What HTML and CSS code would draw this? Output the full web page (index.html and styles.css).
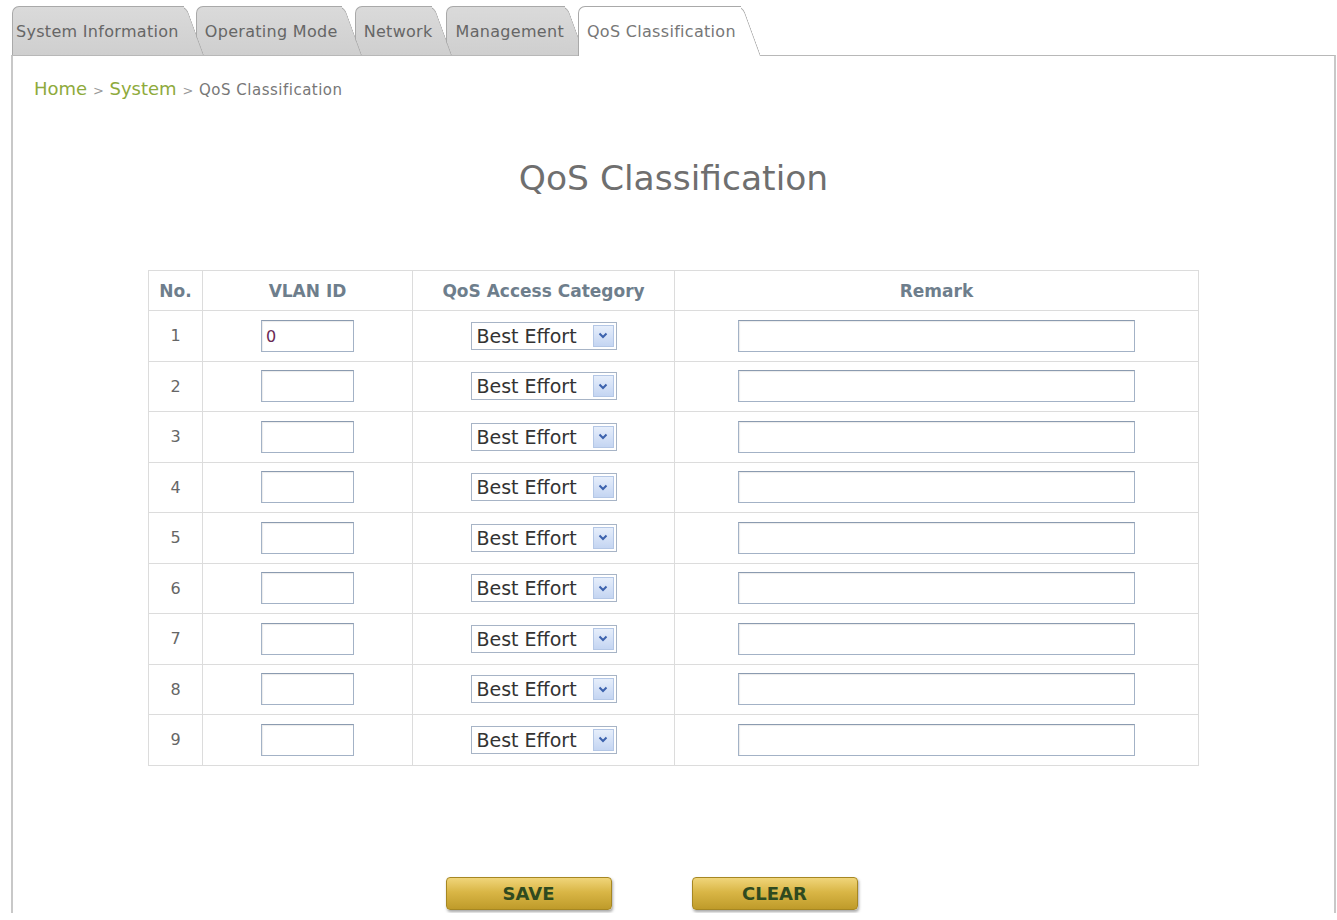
FILE: index.html
```html
<!DOCTYPE html>
<html lang="en">
<head>
    <meta charset="UTF-8">
    <meta name="viewport" content="width=device-width, initial-scale=1.0">
    <title>QoS Classification</title>
    <link rel="stylesheet" href="styles.css">
</head>
<body>
<div class="page">
    <ul class="tabs">
        <li class="tab t1">System Information</li>
        <li class="tab t2">Operating Mode</li>
        <li class="tab t3">Network</li>
        <li class="tab t4">Management</li>
        <li class="tab active">QoS Classification</li>
    </ul>

    <div class="panel">
        <div class="crumbs">
            <a href="#">Home</a> <span class="sep">&gt;</span> <a href="#">System</a> <span class="sep">&gt;</span> <span class="current">QoS Classification</span>
        </div>

        <h1>QoS Classification</h1>

        <form id="qosForm">
            <table class="qos">
                <thead>
                    <tr>
                        <th class="c-no">No.</th>
                        <th class="c-vlan">VLAN ID</th>
                        <th class="c-cat">QoS Access Category</th>
                        <th class="c-rem">Remark</th>
                    </tr>
                </thead>
                <tbody id="rows"></tbody>
            </table>

            <div class="actions">
                <button type="button" class="gold">SAVE</button>
                <button type="reset" class="gold">CLEAR</button>
            </div>
        </form>
    </div>
</div>

<script>
// build the 9 rows
const tbody = document.getElementById("rows");
for (let i = 1; i <= 9; i++) {
    let tr = document.createElement("tr");
    tr.innerHTML = `
        <td class="num">${i}</td>
        <td><input type="text" class="vlan" name="vlan${i}" value="${i === 1 ? "0" : ""}"></td>
        <td>
            <div class="select-wrap">
                <select name="cat${i}">
                    <option>Best Effort</option>
                    <option>Background</option>
                    <option>Video</option>
                    <option>Voice</option>
                </select>
                <span class="arrow"><svg width="10" height="7" viewBox="0 0 10 7"><path d="M1.5 1.5 L5 5 L8.5 1.5" fill="none" stroke="#3c62ad" stroke-width="2"/></svg></span>
            </div>
        </td>
        <td><input type="text" class="remark" name="remark${i}"></td>`;
    tbody.appendChild(tr);
}
</script>
</body>
</html>
```

FILE: styles.css
```css
body {
    margin: 0;
    background: #fff;
    font-family: "DejaVu Sans", Verdana, sans-serif;
    color: #555;
}

.page {
    padding-left: 11px;
    width: 1325px;
}

/* tabs */
.tabs {
    list-style: none;
    margin: 6px 0 0 0;
    padding: 0 0 0 1px;
    display: flex;
    height: 49px;
    position: relative;
    z-index: 2;
}

.tab {
    position: relative;
    height: 49px;
    line-height: 52px;
    font-size: 16px;
    letter-spacing: 0.3px;
    color: #666;
    white-space: nowrap;
}

.tab::before,
.tab::after {
    content: "";
    position: absolute;
    top: 0;
    bottom: 0;
    background: linear-gradient(#dadada, #cfcfcf);
    border: 1px solid #a9a9a9;
    border-bottom: none;
}

.tab::before {
    left: 0;
    right: 20px;
    border-right: none;
    border-radius: 7px 0 0 0;
    z-index: -1;
}

.tab::after {
    left: 30px;
    right: 0;
    border-left: none;
    border-radius: 0 7px 0 0;
    transform: skewX(20deg);
    transform-origin: bottom right;
    z-index: -2;
}

.t1 { z-index: 5; padding: 0 25px 0 4px; margin-right: -8px; }
.t2 { z-index: 4; padding: 0 24px 0 9px; margin-right: -7px; }
.t3 { z-index: 3; padding: 0 19px 0 9px; margin-right: -6px; }
.t4 { z-index: 2; padding: 0 21px 0 10px; margin-right: -7px; }

.tab.active {
    z-index: 10;
    padding: 0 25px 0 9px;
    color: #777;
}

.tab.active::before,
.tab.active::after {
    background: #fff;
    bottom: -1px;
}

/* content panel */
.panel {
    border: 1px solid #b8b8b8;
    border-bottom: none;
    border-left-width: 2px;
    border-right-width: 2px;
    border-left-color: #c8c8c8;
    border-right-color: #c8c8c8;
    height: 858px;
    box-sizing: border-box;
    padding: 23px 0 0 21px;
}

.crumbs {
    height: 20px;
    line-height: 20px;
    font-size: 18px;
}

.crumbs a {
    color: #8eaa3c;
    text-decoration: none;
}

.crumbs .sep {
    color: #999;
    font-size: 13px;
}

.crumbs .current {
    color: #777;
    font-size: 15px;
    letter-spacing: 0.5px;
}

h1 {
    margin: 58px 0 0 -21px;
    text-align: center;
    font-weight: normal;
    font-size: 34.5px;
    line-height: 42px;
    color: #6f6f6f;
}

/* table */
.qos {
    margin: 71px 0 0 114px;
    border-collapse: collapse;
    width: 1051px;
    border: 1px solid #dcdcdc;
}

.qos th,
.qos td {
    border: 1px solid #dcdcdc;
    text-align: center;
    padding: 0;
}

.qos th {
    height: 39px;
    font-size: 17px;
    font-weight: bold;
    color: #6e7e8c;
}

.qos td {
    height: 49.5px;
}

.c-no { width: 53px; }
.c-vlan { width: 209px; }
.c-cat { width: 261px; }

.num {
    font-size: 16px;
    color: #666;
}

input[type="text"] {
    height: 32px;
    box-sizing: border-box;
    border: 1px solid #a3b2c6;
    border-top-color: #8b9bb0;
    box-shadow: inset 1px 1px 1px rgba(0, 0, 0, 0.08);
    padding: 2px 4px 0;
    font-family: "DejaVu Sans", Verdana, sans-serif;
    font-size: 16px;
    color: #6a2a55;
    vertical-align: middle;
}

.vlan { width: 93px; }
.remark { width: 397px; }

.select-wrap {
    position: relative;
    display: inline-block;
    vertical-align: middle;
}

.select-wrap select {
    appearance: none;
    -webkit-appearance: none;
    width: 146px;
    height: 28px;
    border: 1px solid #a7b4c6;
    background: #fff;
    font-family: "DejaVu Sans", Verdana, sans-serif;
    font-size: 19px;
    color: #333;
    padding: 0 0 0 5px;
    border-radius: 0;
    display: block;
}

.select-wrap .arrow {
    position: absolute;
    top: 3px;
    right: 3px;
    width: 21px;
    height: 22px;
    box-sizing: border-box;
    border: 1px solid #b4c7e6;
    background: linear-gradient(#e6eefb, #c4d5f2);
    display: flex;
    align-items: center;
    justify-content: center;
    pointer-events: none;
}

/* buttons */
.actions {
    display: flex;
    justify-content: center;
    gap: 80px;
    margin: 111px 0 0 -65px;
}

.gold {
    width: 166px;
    height: 33px;
    border: 1px solid #a68722;
    border-radius: 4px;
    background: linear-gradient(#f0d57a, #d9b646 45%, #bf9b2a);
    box-shadow: 1px 2px 3px rgba(0, 0, 0, 0.35);
    font-family: "DejaVu Sans", Verdana, sans-serif;
    font-size: 18px;
    font-weight: bold;
    color: #2f4a1f;
    cursor: pointer;
}
```
